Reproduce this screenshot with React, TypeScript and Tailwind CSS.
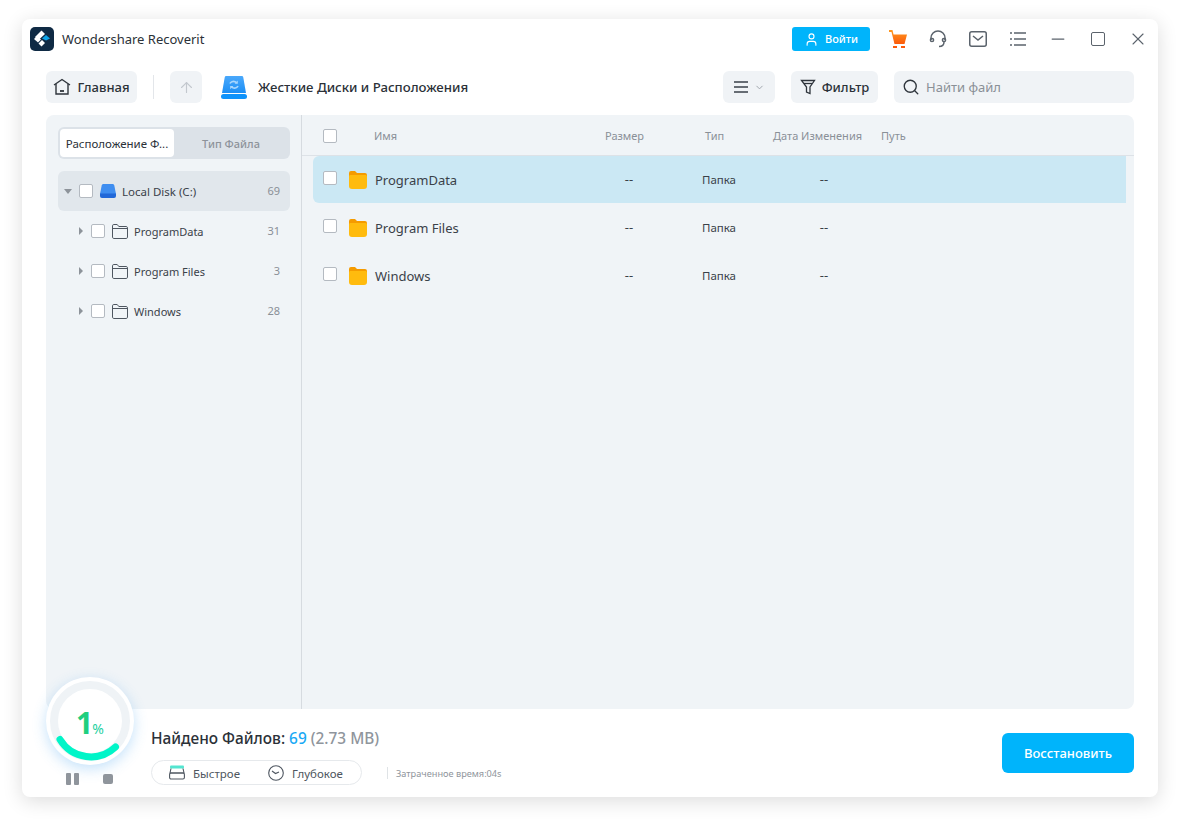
import { ChevronDown, Search, User, Minus, X, ArrowUp } from 'lucide-react';

const font = { fontFamily: '"Noto Sans", "Open Sans", sans-serif' };

const treeRows = [
  { name: 'ProgramData', count: 31 },
  { name: 'Program Files', count: 3 },
  { name: 'Windows', count: 28 },
];

function Check() {
  return <span className="block w-[14px] h-[14px] shrink-0 bg-white border border-[#b4bac1] rounded-[2px]" />;
}

function Logo() {
  return (
    <svg width="24" height="24" viewBox="0 0 24 24" className="shrink-0">
      <rect width="24" height="24" rx="5" fill="#0f2a44" />
      <path d="M12.500 3.500 L16 7 L9.500 13 L6 10 Z" fill="#fff" transform="translate(-1 0)" />
      <path d="M4 12 L7 9 L11 12.500 L8 15.500 Z" fill="#fff" />
      <path d="M8.500 16.500 L12 13 L15 16 L11.500 19.500 Z" fill="#fff" />
      <path d="M12 11.500 L16 8 L20 11.500 L16 13.500 Z" fill="#0ea5e9" />
    </svg>
  );
}

function DriveBlue() {
  return (
    <svg width="26" height="24" viewBox="0 0 26 24" className="shrink-0">
      <defs>
        <linearGradient id="driveTop" x1="0" y1="0" x2="0" y2="1">
          <stop offset="0" stopColor="#4aa8fb" />
          <stop offset="1" stopColor="#1c8ff5" />
        </linearGradient>
      </defs>
      <path d="M5.500 1h15c1 0 1.600.5 1.800 1.400L25 18H1L3.700 2.400C3.900 1.500 4.500 1 5.500 1z" fill="url(#driveTop)" />
      <rect x="0" y="19" width="26" height="5" rx="2.500" fill="#0f93fb" />
      <path d="M9 8.500c.6-1.600 3-2.600 5-1.800l1.500.8M17 11c-.6 1.600-3 2.600-5 1.800l-1.500-.8" fill="none" stroke="#a9d7fd" strokeWidth="1.600" />
      <path d="M16.800 5.500v3.200h-3.200zM9.200 14.200v-3.200h3.200z" fill="#a9d7fd" />
    </svg>
  );
}

function DiskSmall() {
  return (
    <svg width="16" height="14" viewBox="0 0 16 14" className="shrink-0">
      <path d="M3.500 0h9c1 0 1.600.6 1.800 1.500L16 10H0L1.700 1.500C1.900.6 2.500 0 3.500 0z" fill="#3f8ef0" />
      <path d="M0 9.500h16V12a2 2 0 0 1-2 2H2a2 2 0 0 1-2-2z" fill="#2168d8" />
    </svg>
  );
}

function FolderOutline() {
  return (
    <svg width="16" height="15" viewBox="0 0 16 15" fill="none" stroke="#4e5660" strokeWidth="1" className="shrink-0">
      <path d="M.5 4V1.800C.5 1 1 .5 1.800.5h3.400l1.600 2h7.400c.7 0 1.300.6 1.300 1.300v9.400c0 .7-.6 1.300-1.300 1.300H1.800c-.7 0-1.300-.6-1.300-1.300z" />
      <path d="M.5 4.500h15" />
    </svg>
  );
}

function FolderYellow() {
  return (
    <svg width="18" height="18" viewBox="0 0 18 18" className="shrink-0">
      <path d="M0 2a2 2 0 0 1 2-2h4l2 2h8a2 2 0 0 1 2 2v4H0z" fill="#f59b00" />
      <path d="M0 5.500C0 4.700.7 4 1.500 4h15c.8 0 1.500.7 1.500 1.500V15a3 3 0 0 1-3 3H3a3 3 0 0 1-3-3z" fill="#ffbb0e" />
    </svg>
  );
}

function TitleIcons() {
  return (
    <div className="flex items-center">
      <span className="w-10 flex justify-center">
        <svg width="20" height="20" viewBox="0 0 20 20">
          <defs>
            <linearGradient id="cart" x1="0" y1="0" x2="0" y2="1">
              <stop offset="0" stopColor="#ff9a1f" />
              <stop offset="1" stopColor="#fb5a0c" />
            </linearGradient>
          </defs>
          <path d="M1 1h3.500l1 4.500H19l-2.500 9.500H6.500L3.500 3H1z" fill="url(#cart)" />
          <rect x="5" y="17" width="4" height="2" fill="#fb5a0c" />
          <rect x="13" y="17" width="4" height="2" fill="#fb5a0c" />
        </svg>
      </span>
      <span className="w-10 flex justify-center">
        <svg width="20" height="20" viewBox="0 0 20 20" fill="none" stroke="#5b636c" strokeWidth="1.500">
          <path d="M3 11V9a7 7 0 0 1 14 0v2" />
          <circle cx="4" cy="11" r="1.600" />
          <circle cx="16" cy="11" r="1.600" />
          <path d="M16 13c0 3-2 4.500-5 4.500" />
        </svg>
      </span>
      <span className="w-10 flex justify-center">
        <svg width="20" height="18" viewBox="0 0 20 18" fill="none" stroke="#5b636c" strokeWidth="1.500">
          <rect x="1.750" y="1.750" width="16.500" height="14.500" rx="2" />
          <path d="M5 6l5 4 5-4" />
        </svg>
      </span>
      <span className="w-10 flex justify-center">
        <svg width="18" height="16" viewBox="0 0 18 16" fill="none" stroke="#5b636c" strokeWidth="1.500">
          <path d="M5 2h12M5 8h12M5 14h12M1 2h2M1 8h2M1 14h2" />
        </svg>
      </span>
      <span className="w-10 flex justify-center">
        <Minus size={20} strokeWidth={1.5} color="#5b636c" />
      </span>
      <span className="w-10 flex justify-center">
        <span className="block w-[14px] h-[14px] border-[1.5px] border-[#5b636c] rounded-[2px]" />
      </span>
      <span className="w-10 flex justify-center">
        <X size={20} strokeWidth={1.3} color="#5b636c" />
      </span>
    </div>
  );
}

function ProgressRing() {
  return (
    <div className="absolute left-0 top-[-32px] w-[88px] h-[88px] rounded-full bg-white shadow-[0_4px_14px_rgba(64,160,240,0.3)]">
      <svg width="88" height="88" viewBox="0 0 88 88" className="absolute left-0 top-0">
        <circle cx="44" cy="44" r="36" fill="none" stroke="#eff3f6" strokeWidth="8" />
        <path d="M14 62.500 A36 36 0 0 0 69.500 70" fill="none" stroke="#00f5c8" strokeWidth="7" strokeLinecap="round" />
      </svg>
      <div className="absolute left-[30px] top-[28px] flex items-baseline">
        <span className="text-[30px] leading-[36px] font-bold text-[#1fcf7f]">1</span>
        <span className="text-[14px] -ml-[1px] text-[#1fd0a0]">%</span>
      </div>
    </div>
  );
}

export default function App() {
  return (
    <div className="w-[1187px] h-[824px] bg-white pt-[19px] pl-[22px] overflow-hidden" style={font}>
      <div className="w-[1136px] h-[778px] bg-white rounded-lg shadow-[0_4px_20px_rgba(0,0,0,0.14)] flex flex-col">
        {/* title bar */}
        <div className="h-[40px] flex items-center pl-2 shrink-0">
          <Logo />
          <span className="ml-2 pt-[2px] text-[13px] text-[#2b3138]">Wondershare Recoverit</span>
          <div className="ml-auto flex items-center">
            <button className="w-[78px] h-6 bg-[#00b4fb] rounded-[3px] flex items-center justify-center gap-[6px] text-white text-[11px] font-medium">
              <User size={15} strokeWidth={1.8} />
              Войти
            </button>
            <div className="ml-2">
              <TitleIcons />
            </div>
          </div>
        </div>

        {/* toolbar */}
        <div className="h-8 mt-3 px-6 flex items-center shrink-0">
          <button className="w-[91px] h-8 bg-[#f0f3f6] rounded-md flex items-center justify-center gap-[6px] text-[13px] font-medium text-[#2b3138]">
            <svg width="18" height="18" viewBox="0 0 18 18" fill="none" stroke="#2f353c" strokeWidth="1.400">
              <path d="M1 7l8-5.500L17 7" />
              <path d="M3 6v10h12V6" />
              <path d="M7 13h4" strokeWidth="1.800" />
            </svg>
            <span className="pt-[2px]">Главная</span>
          </button>
          <span className="ml-4 w-px h-6 bg-[#e3e6ea]" />
          <button className="ml-4 w-8 h-8 bg-[#f0f3f6] rounded-md flex items-center justify-center">
            <ArrowUp size={17} strokeWidth={1.6} color="#c3c8ce" />
          </button>
          <span className="ml-[19px]">
            <DriveBlue />
          </span>
          <span className="ml-[11px] pt-[2px] text-[13.200px] font-medium text-[#2b3138]">Жесткие Диски и Расположения</span>
          <div className="ml-auto flex items-center">
            <button className="w-[52px] h-8 bg-[#f0f3f6] rounded-md flex items-center justify-center gap-[5px]">
              <svg width="16" height="14" viewBox="0 0 16 14" fill="none" stroke="#3a4149" strokeWidth="1.500">
                <path d="M1 2h14M1 7h14M1 12h14" />
              </svg>
              <ChevronDown size={11} strokeWidth={2} color="#9aa0a7" />
            </button>
            <button className="ml-4 w-[87px] h-8 bg-[#f0f3f6] rounded-md flex items-center justify-center gap-[6px] text-[13px] font-medium text-[#2b3138]">
              <svg width="16" height="16" viewBox="0 0 16 16" fill="none" stroke="#2f353c" strokeWidth="1.300">
                <path d="M1.500 1.500h13L10 8v6.500L6.500 13V8z" />
                <path d="M4 4.500h8" />
              </svg>
              <span className="pt-[2px]">Фильтр</span>
            </button>
            <div className="ml-4 w-[240px] h-8 bg-[#f0f3f6] rounded-md flex items-center pl-2 gap-[6px]">
              <Search size={18} strokeWidth={1.8} color="#2f353c" />
              <span className="pt-[2px] text-[13px] text-[#8a9097]">Найти файл</span>
            </div>
          </div>
        </div>

        {/* main panel */}
        <div className="mt-3 mx-6 h-[594px] bg-[#f0f4f7] rounded-lg flex shrink-0">
          <aside className="w-[256px] border-r border-[#d6dbe0] px-3 pt-3 shrink-0">
            <div className="h-8 w-[232px] bg-[#dce2e8] rounded-md p-[2px] flex items-center">
              <div className="w-[114px] h-7 pt-[2px] bg-white rounded-[4px] flex items-center justify-center text-[11.500px] text-[#2b3138]">
                Расположение Ф...
              </div>
              <div className="flex-1 pt-[2px] text-center text-[11px] font-medium text-[#8d939a]">Тип Файла</div>
            </div>
            <div className="mt-3 h-10 w-[232px] bg-[#e1e7ec] rounded-md flex items-center pl-[6px] pr-[10px] text-[11.500px] text-[#3a4149]">
              <span className="w-0 h-0 border-x-[4px] border-x-transparent border-t-[5px] border-t-[#8d939a]" />
              <span className="ml-[7px]">
                <Check />
              </span>
              <span className="ml-[7px]">
                <DiskSmall />
              </span>
              <span className="ml-[6px] pt-[2px]">Local Disk (C:)</span>
              <span className="ml-auto text-[11px] text-[#8a9097]">69</span>
            </div>
            {treeRows.map((row) => (
              <div key={row.name} className="h-10 w-[232px] flex items-center pl-[21px] pr-[10px] text-[11px] text-[#3a4149]">
                <span className="w-0 h-0 border-y-[4px] border-y-transparent border-l-[4px] border-l-[#8d939a]" />
                <span className="ml-[8px]">
                  <Check />
                </span>
                <span className="ml-[7px]">
                  <FolderOutline />
                </span>
                <span className="ml-[6px] pt-[2px]">{row.name}</span>
                <span className="ml-auto text-[#8a9097]">{row.count}</span>
              </div>
            ))}
          </aside>

          <section className="flex-1 min-w-0">
            <div className="h-[41px] pt-[2px] border-b border-[#dde2e7] flex items-center pl-[21px] text-[11px] text-[#8a9097]">
              <Check />
              <span className="ml-[37px] w-[231px]">Имя</span>
              <span className="w-[100px]">Размер</span>
              <span className="w-[68px]">Тип</span>
              <span className="w-[108px]">Дата Изменения</span>
              <span>Путь</span>
            </div>
            {treeRows.map((row, i) => (
              <div
                key={row.name}
                className={
                  i === 0
                    ? 'h-[47px] ml-[11px] w-[813px] bg-[#cbe8f4] rounded-l-md flex items-center pl-[10px] mb-px'
                    : 'h-[47px] ml-[11px] w-[813px] flex items-center pl-[10px] mb-px'
                }
              >
                <span className="-mt-[3px]">
                  <Check />
                </span>
                <span className="ml-[12px]">
                  <FolderYellow />
                </span>
                <span className="ml-2 pt-[2px] w-[220px] text-[13px] text-[#3a4149]">{row.name}</span>
                <span className="w-[68px] text-center text-[13px] text-[#3a4149]">--</span>
                <span className="ml-[22px] w-[68px] text-center text-[11.500px] text-[#3a4149]">Папка</span>
                <span className="ml-[37px] w-[68px] text-center text-[13px] text-[#3a4149]">--</span>
              </div>
            ))}
          </section>
        </div>

        {/* footer */}
        <div className="relative flex-1 mx-6 flex items-start">
          <ProgressRing />
          <div className="absolute left-[20px] top-[64px] flex items-center gap-[24px]">
            <span className="flex gap-[3px]">
              <span className="block w-[5px] h-3 bg-[#8f959c] rounded-[1px]" />
              <span className="block w-[5px] h-3 bg-[#8f959c] rounded-[1px]" />
            </span>
            <span className="block w-[10px] h-[10px] bg-[#8f959c] rounded-[2px]" />
          </div>

          <div className="ml-[105px] mt-[19px]">
            <div className="text-[15.400px] leading-[22px] font-medium text-[#2b3138]">
              Найдено Файлов: <span className="text-[#1aa9f5]">69</span> <span className="text-[#8f959c]">(2.73 MB)</span>
            </div>
            <div className="mt-[10px] flex items-center">
              <div className="w-[211px] h-[25px] border border-[#e6e9ec] rounded-full flex items-center pl-[17px] text-[11.500px] text-[#4e5660]">
                <svg width="16" height="15" viewBox="0 0 16 15" fill="none" stroke="#4e5660" strokeWidth="1.100" className="shrink-0">
                  <rect x="1" y="0.500" width="14" height="3" rx="1" fill="#53e5d0" stroke="none" />
                  <path d="M2 3.500L1 8h14l-1-4.500" />
                  <rect x="0.600" y="8" width="14.800" height="6" rx="1.500" />
                </svg>
                <span className="ml-2 pt-[2px]">Быстрое</span>
                <svg width="16" height="16" viewBox="0 0 16 16" fill="none" stroke="#4e5660" strokeWidth="1.100" className="ml-[28px] shrink-0">
                  <circle cx="8" cy="8" r="7.300" />
                  <path d="M4 6l3.500 2.500L11 7" />
                </svg>
                <span className="ml-2 pt-[2px]">Глубокое</span>
              </div>
              <span className="ml-[25px] w-px h-3 bg-[#dfe3e6]" />
              <span className="ml-2 pt-[2px] text-[9.200px] text-[#8f959c]">Затраченное время:04s</span>
            </div>
          </div>

          <button className="ml-auto mt-6 w-[132px] h-10 pt-[2px] bg-[#00b4fb] rounded-md text-white text-[13px] font-medium">
            Восстановить
          </button>
        </div>
      </div>
    </div>
  );
}
